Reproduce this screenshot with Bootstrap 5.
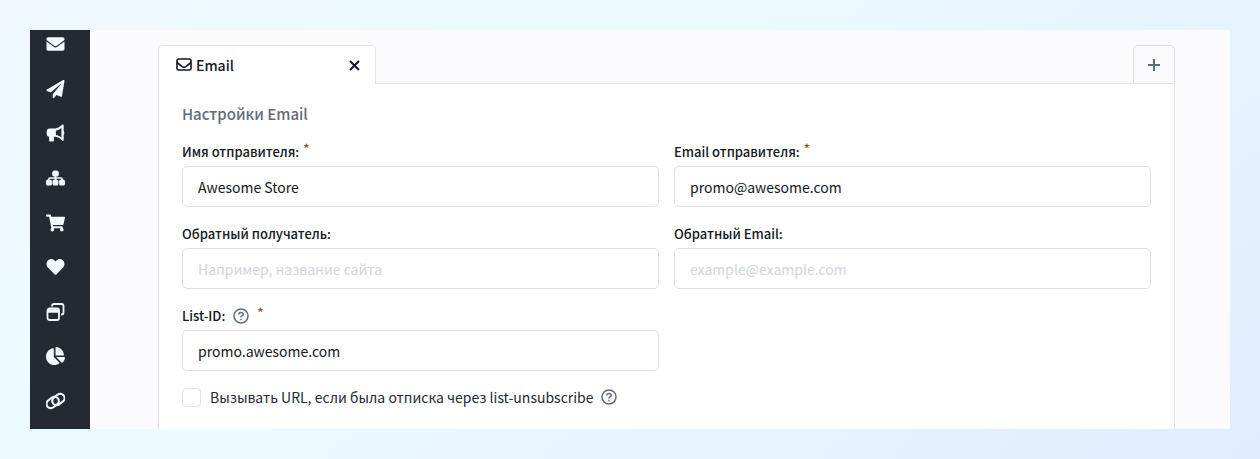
<!DOCTYPE html>
<html lang="ru">
<head>
<meta charset="utf-8">
<meta name="viewport" content="width=device-width, initial-scale=1">
<title>Настройки Email</title>
<link href="https://cdn.jsdelivr.net/npm/bootstrap@5.3.0/dist/css/bootstrap.min.css" rel="stylesheet">
<style>
  :root { --line: #e2e3e9; --ink: #121722; --steel: #5f6b7a; }
  body {
    font: 14px/20px "Noto Sans CJK SC", "Noto Sans", sans-serif;
    color: var(--ink);
    background: linear-gradient(140deg, #f1f8ff 0%, #ebfaff 28%, #eafaff 42%, #e6f3ff 70%, #e1ebff 100%);
    padding: 30px;
  }
  .app-shell { background: #fbfbfe; }
  .side-menu { width: 60px; background: #252932; padding: 4px 9px 18px 0; }
  .side-menu a { height: 20px; color: #f2f9ff; }
  .side-menu svg { height: 18px; width: 19px; fill: currentColor; }
  .workspace { padding: 15px 55px 0 68px; }
  .plain-btn { background: none; border: 0; padding: 0; color: inherit; line-height: 0; }
  .tab-row { height: 39px; }
  .tab-active {
    width: 218px; background: #fff; border: 1px solid var(--line); border-bottom: 0;
    border-radius: 5px 5px 0 0; padding: 0 15px 0 17px; font-weight: 500;
  }
  .tab-rest { border-bottom: 1px solid var(--line); }
  .tab-add { width: 42px; border: 1px solid #d9dce1; border-radius: 5px 5px 0 0; color: var(--steel); }
  .settings-panel { background: #fff; border: 1px solid var(--line); border-width: 0 1px; padding: 20px 23px; }
  .settings-panel h1 { font-size: 15px; line-height: 20px; font-weight: 500; color: #626b78; margin-bottom: 17px; }
  .field-grid { --bs-gutter-x: 15px; --bs-gutter-y: 16px; }
  .field-label { font-size: 13px; height: 22px; font-weight: 500; margin-bottom: 3px; }
  .required-star { color: #a04a16; align-self: flex-start; line-height: 16px; }
  .form-control {
    height: 41px; font-size: 14px; line-height: 20px; padding: 0 15px; color: var(--ink);
    border-color: #dfe1e7; border-radius: 5px;
  }
  .form-control::placeholder { color: #d0d5dd; }
  .check-row { margin-top: 16px; min-height: 20px; }
  .check-row .form-check-input { width: 19px; height: 19px; border-color: #dfe1e7; border-radius: 4px; }
  .check-text { margin: 0 8px 0 9px; color: #242936; }
</style>
</head>
<body class="min-vh-100 d-flex">
<div class="app-shell d-flex flex-grow-1 overflow-hidden">
  <nav class="side-menu d-flex flex-column justify-content-between flex-shrink-0" aria-label="Меню">
    <a href="#" class="d-flex align-items-center justify-content-center" aria-label="Письма"><svg viewBox="0 0 512 512"><path d="M502 191c4-3 10 0 10 5v204c0 27-21 48-48 48H48c-27 0-48-21-48-48V196c0-5 6-8 10-5 22 17 52 39 154 114 21 15 57 48 92 48s71-33 92-48c102-75 131-97 154-114zM256 320c23 0 57-29 73-41 133-96 143-105 174-129 6-4 9-11 9-19v-19c0-27-21-48-48-48H48C21 64 0 85 0 112v19c0 8 4 14 9 19 31 24 41 33 174 129 17 12 50 41 73 41z"/></svg></a>
    <a href="#" class="d-flex align-items-center justify-content-center" aria-label="Рассылки"><svg viewBox="0 0 512 512"><path d="M476 3.200L12.500 270.600c-18.100 10.400-15.800 35.600 2.200 43.200L121 358.400l287.300-253.200c5.500-4.900 13.300 2.600 8.600 8.300L176 407v80.500c0 23.600 28.500 32.900 42.500 15.800L282 426l124.600 52.200c14.200 6 30.400-2.900 33-18.200l72-432C515 7.800 493.300-6.800 476 3.200z"/></svg></a>
    <a href="#" class="d-flex align-items-center justify-content-center" aria-label="Кампании"><svg viewBox="0 0 18 18"><path fill-rule="evenodd" d="M16 .6c.6-.3 1.200.1 1.200.8v5.800c.9.600.9 2.600 0 3.200v5.700c0 .7-.6 1.100-1.200.7-2.200-2.100-4.400-3.600-6.800-4H7.400v3.900c0 .5-.3.800-.8.800H3.400c-.5 0-.8-.3-.8-.8v-4C1 12.500.2 11.500.2 10V7.200C.2 5.500 1.500 4.400 3.200 4.400h6C11.600 4 13.800 2.500 16 .6zM9.400 6.700v4.200c2 .3 3.800 1.200 5.500 2.500V4.100c-1.700 1.400-3.500 2.300-5.500 2.600z"/></svg></a>
    <a href="#" class="d-flex align-items-center justify-content-center" aria-label="Сценарии"><svg viewBox="0 0 20 18"><rect x="6.500" y="1" width="7" height="6.500" rx="2.800"/><rect x="0" y="10.500" width="6.200" height="6.500" rx="2"/><rect x="6.900" y="10.500" width="6.200" height="6.500" rx="2"/><rect x="13.800" y="10.500" width="6.200" height="6.500" rx="2"/><path d="M10 6v6M3 12V10q0-1 1-1h12q1 0 1 1v2" fill="none" stroke="currentColor" stroke-width="1.600"/></svg></a>
    <a href="#" class="d-flex align-items-center justify-content-center" aria-label="Заказы"><svg viewBox="0 0 576 512"><path d="M528.100 301.300l47.300-208C578.800 78.300 567.400 64 552 64H159.200l-9.200-44.800C147.800 8 137.900 0 126.500 0H24C10.700 0 0 10.700 0 24v16c0 13.300 10.700 24 24 24h69.900l70.200 343.400C147.300 417.100 136 435.200 136 456c0 30.900 25.100 56 56 56s56-25.100 56-56c0-15.700-6.400-29.800-16.800-40h209.600C430.400 426.200 424 440.300 424 456c0 30.900 25.100 56 56 56s56-25.100 56-56c0-22.200-12.900-41.300-31.600-50.400l5.500-24.300c3.400-15-8-29.300-23.400-29.300H218.100l-6.500-32h293.100c11.200 0 20.900-7.800 23.400-18.700z"/></svg></a>
    <a href="#" class="d-flex align-items-center justify-content-center" aria-label="Лояльность"><svg viewBox="0 0 512 512"><path d="M462.300 62.600C407.500 15.900 326 24.300 275.700 76.200L256 96.500l-19.700-20.300C186.100 24.300 104.500 15.900 49.700 62.600c-62.800 53.600-66.100 149.800-9.900 207.900l193.500 199.800c12.500 12.900 32.800 12.900 45.300 0l193.500-199.800c56.300-58.100 53-154.300-9.800-207.900z"/></svg></a>
    <a href="#" class="d-flex align-items-center justify-content-center" aria-label="Формы"><svg viewBox="0 0 18 18" style="fill:none" stroke="currentColor" stroke-width="1.800"><path d="M5.500 3.500V3q0-2 2-2H15q2 0 2 2v6.500q0 2-2 2h-.5"/><rect x="1" y="5.500" width="11.500" height="11.500" rx="2"/><path d="M1 8h11.500" stroke-width="3.500"/></svg></a>
    <a href="#" class="d-flex align-items-center justify-content-center" aria-label="Отчёты"><svg viewBox="0 0 544 512"><path d="M527.800 288H290.500l158.100 158c6 6 15.800 6.500 21.900.5 38.700-36.500 65.300-85.600 73.100-140.900 1.400-9.300-6.400-17.600-15.800-17.600zm-15.800-64.800C503.700 103.700 408.300 8.300 288.800.04 279.700-.6 272 7.100 272 16.200V240h223.800c9.100 0 16.800-7.700 16.200-16.800zM224 288V50.700c0-9.400-8.200-17.200-17.500-15.800C86.600 51.800-5 156.200.2 281.200 5.500 409.500 114.300 513.500 242.700 511.900c50.500-.6 97.100-16.900 135.500-44.200 7.900-5.600 8.400-17.200 1.600-24.100L224 288z"/></svg></a>
    <a href="#" class="d-flex align-items-center justify-content-center" aria-label="Ссылки"><svg viewBox="0 0 20 18" style="fill:none" stroke="currentColor" stroke-width="2.200"><rect x="0" y="6" width="14" height="9" rx="4.500" transform="rotate(-38 7 10.500)"/><rect x="6" y="3" width="14" height="9" rx="4.500" transform="rotate(-38 13 7.500)"/></svg></a>
  </nav>

  <main class="workspace flex-grow-1 d-flex flex-column">
    <div class="tab-row d-flex">
      <div class="tab-active d-flex align-items-center">
        <svg width="16" height="16" viewBox="0 0 16 16" fill="none" stroke="currentColor" stroke-width="1.600" aria-hidden="true"><rect x="1" y="2" width="14" height="11" rx="1.500"/><path d="M1 5.500l5.500 4.300q1.500 1 3 0L15 5.500"/></svg>
        <span class="ms-1">Email</span>
        <button type="button" class="plain-btn ms-auto" aria-label="Закрыть"><svg width="11" height="11" viewBox="0 0 11 11" fill="none" stroke="currentColor" stroke-width="2"><path d="M1 1l9 9M10 1L1 10"/></svg></button>
      </div>
      <div class="tab-rest flex-grow-1"></div>
      <button type="button" class="plain-btn tab-add" aria-label="Добавить"><svg width="12" height="12" viewBox="0 0 12 12" fill="none" stroke="currentColor" stroke-width="2"><path d="M6 0v12M0 6h12"/></svg></button>
    </div>

    <form class="settings-panel flex-grow-1">
      <h1>Настройки Email</h1>
      <div class="row field-grid">
        <div class="col-6">
          <div class="field-label d-flex align-items-center"><label for="sender">Имя отправителя:</label><span class="required-star ms-1">*</span></div>
          <input id="sender" class="form-control" type="text" value="Awesome Store">
        </div>
        <div class="col-6">
          <div class="field-label d-flex align-items-center"><label for="senderMail">Email отправителя:</label><span class="required-star ms-1">*</span></div>
          <input id="senderMail" class="form-control" type="email" value="promo@awesome.com">
        </div>
        <div class="col-6">
          <div class="field-label d-flex align-items-center"><label for="reply">Обратный получатель:</label></div>
          <input id="reply" class="form-control" type="text" placeholder="Например, название сайта">
        </div>
        <div class="col-6">
          <div class="field-label d-flex align-items-center"><label for="replyMail">Обратный Email:</label></div>
          <input id="replyMail" class="form-control" type="email" placeholder="example@example.com">
        </div>
        <div class="col-6">
          <div class="field-label d-flex align-items-center"><label for="listId">List-ID:</label>
            <button type="button" class="plain-btn help-btn ms-2" aria-label="Справка"><svg width="16" height="16" viewBox="0 0 16 16" fill="none" stroke="#5f6b7a" stroke-width="1.500"><circle cx="8" cy="8" r="7"/><path d="M5.800 6.500q0-2 2.200-2t2.200 1.800q0 1-1.200 1.600T8 9.400M8 10.700v1.500"/></svg></button>
            <span class="required-star ms-2">*</span></div>
          <input id="listId" class="form-control" type="text" value="promo.awesome.com">
        </div>
      </div>
      <div class="check-row d-flex align-items-center">
        <input id="callUrl" class="form-check-input m-0 flex-shrink-0" type="checkbox">
        <label class="check-text" for="callUrl">Вызывать URL, если была отписка через list-unsubscribe</label>
        <button type="button" class="plain-btn help-btn" aria-label="Справка"><svg width="16" height="16" viewBox="0 0 16 16" fill="none" stroke="#5f6b7a" stroke-width="1.500"><circle cx="8" cy="8" r="7"/><path d="M5.800 6.500q0-2 2.200-2t2.200 1.800q0 1-1.200 1.600T8 9.400M8 10.700v1.500"/></svg></button>
      </div>
    </form>
  </main>
</div>
<script src="https://cdn.jsdelivr.net/npm/bootstrap@5.3.0/dist/js/bootstrap.bundle.min.js"></script>
</body>
</html>
